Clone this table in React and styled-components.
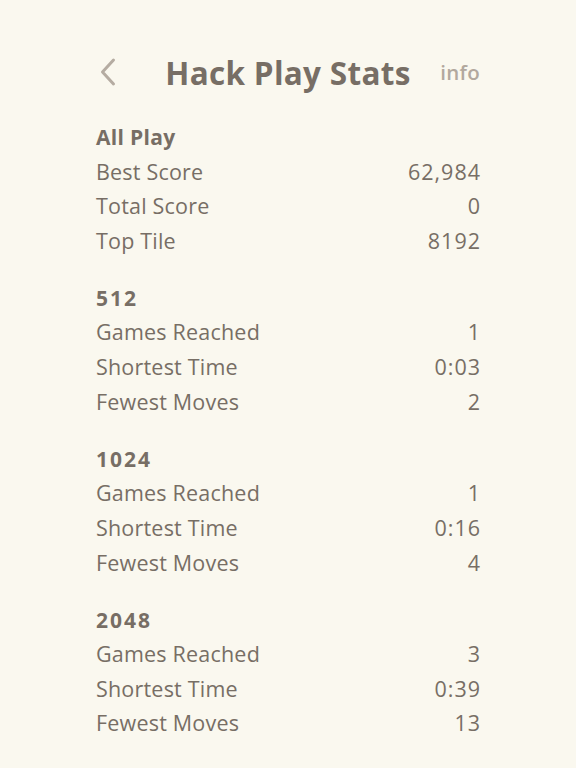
import React from "react";
import styled, { createGlobalStyle } from "styled-components";

const Global = createGlobalStyle`
  html, body { margin: 0; padding: 0; background: #faf8ef; }
  body { font-family: "Open Sans", "Noto Sans", sans-serif; color: #776e65; }
`;

const Page = styled.div`
  width: 576px;
  min-height: 768px;
  box-sizing: border-box;
  padding: 50px 96px 0 96px;
  display: flex;
  flex-direction: column;
`;

const Header = styled.header`
  display: grid;
  grid-template-columns: 1fr auto 1fr;
  align-items: center;
  height: 44px;
  margin-bottom: 26px;
`;

const Back = styled.button`
  background: none;
  border: 0;
  padding: 0 0 0 3px;
  justify-self: start;
  display: flex;
  align-items: center;
  cursor: pointer;
`;

const Title = styled.h1`
  margin: 0;
  font-size: 31.5px;
  font-weight: 700;
  color: #776e65;
  letter-spacing: 0.3px;
`;

const Info = styled.span`
  justify-self: end;
  font-size: 20.5px;
  font-weight: 600;
  color: #b2a89e;
  letter-spacing: 0.3px;
`;

const Section = styled.section`
  display: flex;
  flex-direction: column;
  margin-bottom: 22.5px;
`;

const SectionTitle = styled.div`
  font-size: 21px;
  font-weight: 700;
  line-height: 34.6px;
  letter-spacing: ${(p) => (p.$numeric ? "2px" : "0.3px")};
`;

const Row = styled.div`
  display: flex;
  justify-content: space-between;
  font-size: 21.5px;
  line-height: 34.6px;
`;

const Label = styled.span`
  letter-spacing: 0.2px;
`;

const Value = styled.span`
  letter-spacing: 1px;
  margin-right: -1px;
`;

const sections = [
  { title: "All Play", rows: [["Best Score", "62,984"], ["Total Score", "0"], ["Top Tile", "8192"]] },
  { title: "512", rows: [["Games Reached", "1"], ["Shortest Time", "0:03"], ["Fewest Moves", "2"]] },
  { title: "1024", rows: [["Games Reached", "1"], ["Shortest Time", "0:16"], ["Fewest Moves", "4"]] },
  { title: "2048", rows: [["Games Reached", "3"], ["Shortest Time", "0:39"], ["Fewest Moves", "13"]] },
];

export default function App() {
  return (
    <>
      <Global />
      <Page>
        <Header>
          <Back aria-label="back">
            <svg width="18" height="30" viewBox="0 0 18 30">
              <path d="M14.5 3 L3.5 15 L14.5 27" fill="none" stroke="#b5aca2" strokeWidth="3" strokeLinecap="round" strokeLinejoin="round" />
            </svg>
          </Back>
          <Title>Hack Play Stats</Title>
          <Info>info</Info>
        </Header>
        {sections.map((s) => (
          <Section key={s.title}>
            <SectionTitle $numeric={/^\d+$/.test(s.title)}>{s.title}</SectionTitle>
            {s.rows.map(([k, v]) => (
              <Row key={k}>
                <Label>{k}</Label>
                <Value>{v}</Value>
              </Row>
            ))}
          </Section>
        ))}
      </Page>
    </>
  );
}
